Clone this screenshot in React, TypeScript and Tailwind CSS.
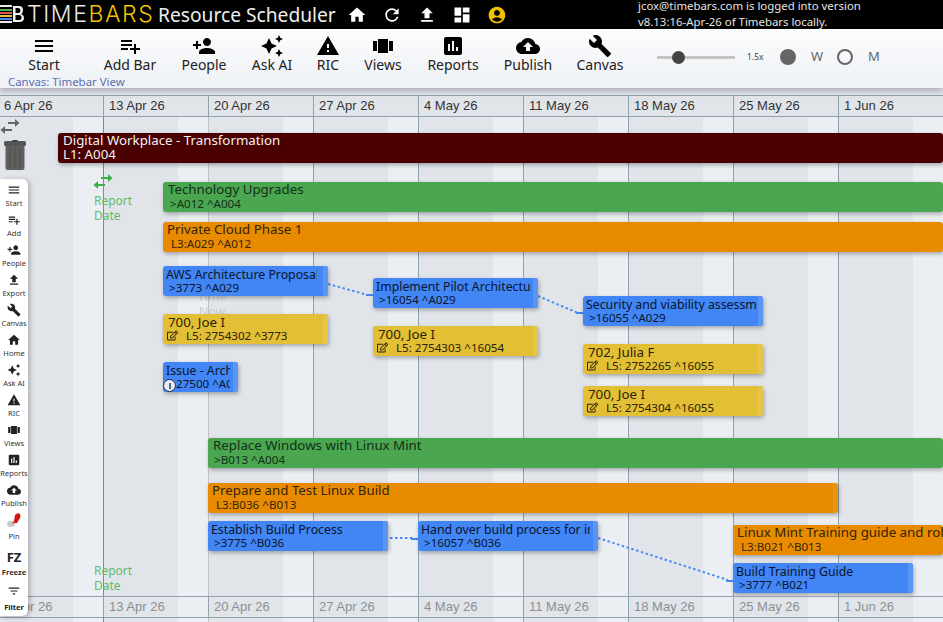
import React from "react";
import {
  MdHome, MdRefresh, MdFileUpload, MdDashboard, MdAccountCircle, MdMenu, MdPlaylistAdd, MdPersonAdd,
  MdAutoAwesome, MdWarning, MdViewCarousel, MdAssessment, MdCloudUpload, MdBuild, MdFilterList,
} from "react-icons/md";
import { FaRegEdit } from "react-icons/fa";

const UI = { fontFamily: '"Noto Sans", sans-serif' };
const DATES = ["6 Apr 26", "13 Apr 26", "20 Apr 26", "27 Apr 26", "4 May 26", "11 May 26", "18 May 26", "25 May 26", "1 Jun 26"];

type BarT = { x: number; y: number; w: number; kind: "red" | "green" | "orange" | "blue" | "yellow"; t: string; s: string; tx: number; sx: number; icon?: "edit" | "info"; tw?: number; sw?: number };
const BARS: BarT[] = [
  { x: 58, y: 133, w: 885, kind: "red", t: "Digital Workplace - Transformation", s: "L1: A004", tx: 5, sx: 5 },
  { x: 163, y: 182, w: 780, kind: "green", t: "Technology Upgrades", s: ">A012 ^A004", tx: 5, sx: 7 },
  { x: 163, y: 222, w: 780, kind: "orange", t: "Private Cloud Phase 1", s: "L3:A029 ^A012", tx: 4, sx: 8 },
  { x: 163, y: 266, w: 165, kind: "blue", t: "AWS Architecture Proposal", s: ">3773 ^A029", tx: 3, sx: 6, tw: 151 },
  { x: 163, y: 314, w: 165, kind: "yellow", t: "700, Joe I", s: "L5: 2754302 ^3773", tx: 5, sx: 23, icon: "edit" },
  { x: 163, y: 362, w: 75, kind: "blue", t: "Issue - Architecture", s: "27500 ^A029", tx: 3, sx: 13, icon: "info", tw: 64, sw: 54 },
  { x: 373, y: 278, w: 165, kind: "blue", t: "Implement Pilot Architecture", s: ">16054 ^A029", tx: 3, sx: 6, tw: 155 },
  { x: 373, y: 326, w: 165, kind: "yellow", t: "700, Joe I", s: "L5: 2754303 ^16054", tx: 5, sx: 23, icon: "edit" },
  { x: 583, y: 296, w: 180, kind: "blue", t: "Security and viability assessment", s: ">16055 ^A029", tx: 3, sx: 6, tw: 171 },
  { x: 583, y: 344, w: 180, kind: "yellow", t: "702, Julia F", s: "L5: 2752265 ^16055", tx: 5, sx: 23, icon: "edit" },
  { x: 583, y: 386, w: 180, kind: "yellow", t: "700, Joe I", s: "L5: 2754304 ^16055", tx: 5, sx: 23, icon: "edit" },
  { x: 208, y: 438, w: 735, kind: "green", t: "Replace Windows with Linux Mint", s: ">B013 ^A004", tx: 5, sx: 6 },
  { x: 208, y: 483, w: 630, kind: "orange", t: "Prepare and Test Linux Build", s: "L3:B036 ^B013", tx: 4, sx: 8 },
  { x: 208, y: 521, w: 180, kind: "blue", t: "Establish Build Process", s: ">3775 ^B036", tx: 3, sx: 6, tw: 171 },
  { x: 418, y: 521, w: 180, kind: "blue", t: "Hand over build process for implementation", s: ">16057 ^B036", tx: 3, sx: 6, tw: 169 },
  { x: 733, y: 525, w: 210, kind: "orange", t: "Linux Mint Training guide and roll out", s: "L3:B021 ^B013", tx: 4, sx: 8 },
  { x: 733, y: 563, w: 180, kind: "blue", t: "Build Training Guide", s: ">3777 ^B021", tx: 3, sx: 6, tw: 171 },
];

function barClass(k: BarT["kind"]) {
  if (k === "red") return "bg-[#4a0000] text-[#f2f2f2]";
  if (k === "green") return "bg-[#4aa64f] text-[#12301a]";
  if (k === "orange") return "bg-[#e88b00] text-[#33240a]";
  if (k === "blue") return "bg-[#4285f4] text-[#08152e]";
  return "bg-[#e3bf35] text-[#2b2208]";
}
function endClass(k: BarT["kind"]) {
  if (k === "orange") return "bg-[#ea9416]";
  if (k === "blue") return "bg-[#5a94f6]";
  if (k === "yellow") return "bg-[#e6c548]";
  return "hidden";
}
function titleClass(k: BarT["kind"]) {
  if (k === "blue") return "top-[1px] text-[12.3px] leading-[16px]";
  if (k === "yellow") return "top-[0px] text-[13.3px] leading-[16px]";
  return "top-[-1px] text-[13.3px] leading-[16px]";
}
function subClass(k: BarT["kind"]) {
  if (k === "red") return "top-[13px] text-[13.3px] leading-[16px]";
  return "top-[15px] text-[11.6px] leading-[14px]";
}

function Bar({ b }: { b: BarT }) {
  return (
    <div
      className={`absolute h-[30px] rounded-[3px] shadow-[1px_2px_4px_rgba(0,0,0,0.3)] overflow-hidden ${barClass(b.kind)}`}
      style={{ left: b.x, top: b.y - 117, width: b.w }}
    >
      {b.x + b.w < 943 && <div className={`absolute right-0 top-0 bottom-0 w-[5px] ${endClass(b.kind)}`} />}
      <div className={`absolute whitespace-nowrap overflow-hidden ${titleClass(b.kind)}`} style={{ left: b.tx, width: b.tw }}>
        {b.t}
      </div>
      <div className={`absolute whitespace-nowrap overflow-hidden ${subClass(b.kind)}`} style={{ left: b.sx, width: b.sw }}>
        {b.s}
      </div>
      {b.icon === "edit" && <FaRegEdit className="absolute left-[4px] top-[16px] text-[11px] text-[#2b2208]" />}
    </div>
  );
}

function InfoBadge() {
  return (
    <div className="absolute left-[163px] top-[262px] w-[13px] h-[13px] rounded-full bg-[#e8ecf4] border border-[#1a2b4a] flex items-center justify-center">
      <div className="w-[2px] h-[6px] bg-[#4a6aa0]" />
    </div>
  );
}

function SwapArrows({ cls, fill }: { cls: string; fill: string }) {
  return (
    <svg className={`absolute ${cls}`} width="20" height="16" viewBox="0 0 20 16" fill={fill}>
      <rect x="8" y="3" width="8" height="2" />
      <polygon points="15,0 19.5,4 15,8" />
      <rect x="4" y="10" width="8" height="2" />
      <polygon points="5,7 0.5,11 5,15" />
    </svg>
  );
}

function Tool({ icon, label, cls }: { icon: React.ReactNode; label: string; cls: string }) {
  return (
    <div className={`flex flex-col items-center ${cls}`}>
      <div className="h-[26px] flex items-center justify-center text-black">{icon}</div>
      <div className="text-[14px] leading-[18px] -mt-[3px] text-[#222] whitespace-nowrap">{label}</div>
    </div>
  );
}

function Side({ icon, label, h = 30, cls = "text-[#333]" }: { icon: React.ReactNode; label: string; h?: number; cls?: string }) {
  return (
    <div className="flex flex-col items-center w-full" style={{ height: h }}>
      <div className="h-[16px] flex items-center justify-center text-[#222] text-[14px]">{icon}</div>
      <div className={`text-[7.5px] leading-[10px] whitespace-nowrap ${cls}`}>{label}</div>
    </div>
  );
}

function DateRow({ muted }: { muted?: boolean }) {
  return (
    <div className={`flex h-[22px] border-y border-[#8fa3ad] ${muted ? "text-[#8a8f94]" : "text-[#333] bg-[#e1e5ea]"}`} style={{ fontFamily: '"Liberation Sans", sans-serif' }}>
      <div className="w-[103px] shrink-0 text-[13px] leading-[20px] pl-[4px]">{DATES[0]}</div>
      {DATES.slice(1).map((d) => (
        <div key={d} className="w-[105px] shrink-0 border-l border-[#8fa3ad] text-[13px] leading-[20px] pl-[5px] whitespace-nowrap">
          {d}
        </div>
      ))}
    </div>
  );
}

function Logo() {
  return (
    <svg className="shrink-0" width="25" height="29" viewBox="0 0 25 29">
      <rect x="0" y="5" width="12" height="2" fill="#e8e8e8" />
      <rect x="0" y="9" width="12" height="2" fill="#4caf50" />
      <rect x="0" y="12" width="12" height="2" fill="#d9534f" />
      <rect x="0" y="15" width="12" height="2" fill="#e3bf35" />
      <rect x="0" y="18" width="12" height="2" fill="#4285f4" />
      <rect x="0" y="21" width="12" height="2" fill="#e8e8e8" />
      <path d="M13 6 H19 Q23 6 23 10 Q23 13 21 14 Q24 15 24 18 Q24 22 19 22 H13 Z M15.5 8 V13 H18.5 Q20.5 13 20.5 10.5 Q20.5 8 18.5 8 Z M15.5 15 V20 H19 Q21.5 20 21.5 17.5 Q21.5 15 19 15 Z" fill="#f0f0f0" fillRule="evenodd" />
    </svg>
  );
}

export default function App() {
  return (
    <div className="w-[943px] h-[622px] overflow-hidden flex flex-col bg-[#e1e5ea] relative" style={UI}>
      <header className="h-[29px] bg-black flex items-center text-white shrink-0 relative z-30">
        <Logo />
        <div className="text-[23px] leading-[29px] tracking-[1.6px] font-light w-[133px] shrink-0 pl-[2px] whitespace-nowrap" style={{ fontFamily: "Inter, sans-serif" }}>
          <span className="text-[#e8e8e8]">TIME</span>
          <span className="text-[#f2c200]">BARS</span>
        </div>
        <div className="text-[19.2px] leading-[29px] w-[189px] shrink-0 text-[#eee] whitespace-nowrap">Resource Scheduler</div>
        <div className="flex items-center gap-[15px] text-[20px]">
          <MdHome />
          <MdRefresh />
          <MdFileUpload />
          <MdDashboard />
          <MdAccountCircle className="text-[#f2c200]" />
        </div>
        <div className="absolute left-[638px] top-0 text-[11.4px] leading-[16px] text-[#e4e4e4] whitespace-nowrap">
          <div className="-mt-[2px]">jcox@timebars.com is logged into version</div>
          <div>v8.13:16-Apr-26 of Timebars locally.</div>
        </div>
      </header>

      <div className="h-[59px] shrink-0 relative z-20 bg-gradient-to-b from-[#fbfcfd] to-[#eef1f5] shadow-[0_3px_6px_rgba(0,0,0,0.25)]">
        <div className="flex pt-[4px]">
          <Tool icon={<MdMenu size={24} />} label="Start" cls="w-[44px] ml-[22px]" />
          <Tool icon={<MdPlaylistAdd size={24} />} label="Add Bar" cls="w-[60px] ml-[34px]" />
          <Tool icon={<MdPersonAdd size={24} />} label="People" cls="w-[50px] ml-[19px]" />
          <Tool icon={<MdAutoAwesome size={24} />} label="Ask AI" cls="w-[44px] ml-[21px]" />
          <Tool icon={<MdWarning size={24} />} label="RIC" cls="w-[30px] ml-[19px]" />
          <Tool icon={<MdViewCarousel size={24} />} label="Views" cls="w-[44px] ml-[18px]" />
          <Tool icon={<MdAssessment size={24} />} label="Reports" cls="w-[54px] ml-[21px]" />
          <Tool icon={<MdCloudUpload size={24} />} label="Publish" cls="w-[50px] ml-[23px]" />
          <Tool icon={<MdBuild size={24} />} label="Canvas" cls="w-[50px] ml-[22px]" />
          <div className="flex items-center h-[26px] ml-[32px] mt-[11px]">
            <div className="w-[78px] h-[3px] bg-[#c4c4c4] relative shrink-0">
              <div className="absolute left-[15px] top-[-5px] w-[13px] h-[13px] rounded-full bg-[#444]" />
            </div>
            <div className="text-[8.5px] text-[#444] ml-[12px] w-[33px] shrink-0">1.5x</div>
            <div className="w-[16px] h-[16px] rounded-full bg-[#666] shrink-0" />
            <div className="text-[13px] text-[#666] ml-[15px] w-[26px] shrink-0">W</div>
            <div className="w-[16px] h-[16px] rounded-full border-2 border-[#666] shrink-0" />
            <div className="text-[13px] text-[#666] ml-[15px]">M</div>
          </div>
        </div>
        <div className="absolute left-[8px] top-[47px] text-[11.4px] leading-[12px] text-[#5b6fb0] whitespace-nowrap">Canvas: Timebar View</div>
      </div>

      <div className="h-[7px] shrink-0" />
      <DateRow />

      <div className="relative flex-1">
        <div className="absolute inset-0 flex">
          <div className="w-[73px] shrink-0" />
          <div className="w-[30px] shrink-0 bg-[#ebeff3]" />
          {DATES.slice(1).map((d) => (
            <div key={d} className="w-[105px] shrink-0 flex border-l border-[#8fa3ad]">
              <div className="w-[74px] shrink-0" />
              <div className="w-[30px] shrink-0 bg-[#ebeff3]" />
            </div>
          ))}
        </div>
        <div className="absolute left-[208px] top-0 bottom-0 w-px bg-[#c2c2c2]" />
        <div className="absolute left-[103px] top-0 bottom-0 w-px bg-[#5aa860]" />

        <div className="absolute left-[196px] top-[172px] text-[12.5px] leading-[15px] text-[#c9cdd2] text-center w-[32px]">Time<br />Now</div>

        <SwapArrows cls="left-[0px] top-[2px]" fill="#666666" />
        <svg className="absolute left-[3px] top-[23px]" width="24" height="31" viewBox="0 0 24 31">
          <rect x="1" y="1" width="22" height="5" rx="1.5" fill="#555" />
          <rect x="9" y="0" width="6" height="2" rx="1" fill="#444" />
          <path d="M2.5 6 H21.5 V28 Q21.5 30 19.5 30 H4.5 Q2.5 30 2.5 28 Z" fill="#5f5f5f" />
          <g stroke="#4e4e4e" strokeWidth="1">
            <line x1="7" y1="8" x2="7" y2="28" />
            <line x1="12" y1="8" x2="12" y2="28" />
            <line x1="17" y1="8" x2="17" y2="28" />
          </g>
        </svg>
        <SwapArrows cls="left-[93px] top-[57px]" fill="#3fae49" />
        <div className="absolute left-[94px] top-[76px] text-[12px] leading-[15px] text-[#63bb68]">Report<br />Date</div>
        <div className="absolute left-[94px] top-[446px] text-[12px] leading-[15px] text-[#63bb68]">Report<br />Date</div>

        <svg className="absolute left-0 top-0 pointer-events-none" width="943" height="505">
          <g stroke="#4a8bf5" strokeWidth="2" strokeDasharray="2.5 2.5" fill="none">
            <line x1="328" y1="167" x2="368" y2="178" />
            <line x1="538" y1="179" x2="578" y2="196" />
            <line x1="390" y1="421" x2="414" y2="421" />
            <line x1="598" y1="421" x2="728" y2="463" />
          </g>
          <g fill="#4285f4">
            <rect x="366" y="177" width="7" height="2" />
            <rect x="576" y="195" width="7" height="2" />
            <rect x="411" y="421" width="7" height="2" />
            <rect x="726" y="463" width="7" height="2" />
          </g>
        </svg>

        {BARS.map((b, i) => (
          <Bar key={i} b={b} />
        ))}
        <InfoBadge />
      </div>

      <div className="absolute left-0 right-0 top-[596px]">
        <DateRow muted />
      </div>
      <div className="absolute left-[103px] top-[617px] h-[5px] w-px bg-[#5aa860]" />

      <aside className="absolute left-0 top-[179px] w-[28px] h-[437px] bg-white rounded-r-[6px] shadow-[2px_1px_5px_rgba(0,0,0,0.25)] pt-[3px] z-10 flex flex-col items-center">
        <Side icon={<MdMenu />} label="Start" />
        <Side icon={<MdPlaylistAdd />} label="Add" />
        <Side icon={<MdPersonAdd />} label="People" />
        <Side icon={<MdFileUpload />} label="Export" />
        <Side icon={<MdBuild />} label="Canvas" />
        <Side icon={<MdHome />} label="Home" />
        <Side icon={<MdAutoAwesome />} label="Ask AI" />
        <Side icon={<MdWarning />} label="RIC" />
        <Side icon={<MdViewCarousel />} label="Views" />
        <Side icon={<MdAssessment />} label="Reports" />
        <Side icon={<MdCloudUpload />} label="Publish" />
        <div className="flex flex-col items-center h-[37px] -mt-[1px]">
          <svg width="16" height="18" viewBox="0 0 16 18">
            <ellipse cx="5" cy="13" rx="4" ry="3" fill="#c8c8c8" />
            <path d="M6 13 L8 10 L9 4 Q12 1 14 3 Q15 5 14 7 L11 12 L8 12 Z" fill="#d01616" />
          </svg>
          <div className="text-[7.5px] leading-[10px] text-[#333] mt-[2px]">Pin</div>
        </div>
        <div className="flex flex-col items-center h-[34px] mt-[1px]">
          <div className="text-[13px] leading-[16px] font-bold text-[#222]">FZ</div>
          <div className="text-[7.5px] leading-[10px] font-bold text-[#333] mt-[2px]">Freeze</div>
        </div>
        <Side icon={<MdFilterList />} label="Filter" cls="text-[#222] font-bold mt-[3px]" />
      </aside>
    </div>
  );
}
